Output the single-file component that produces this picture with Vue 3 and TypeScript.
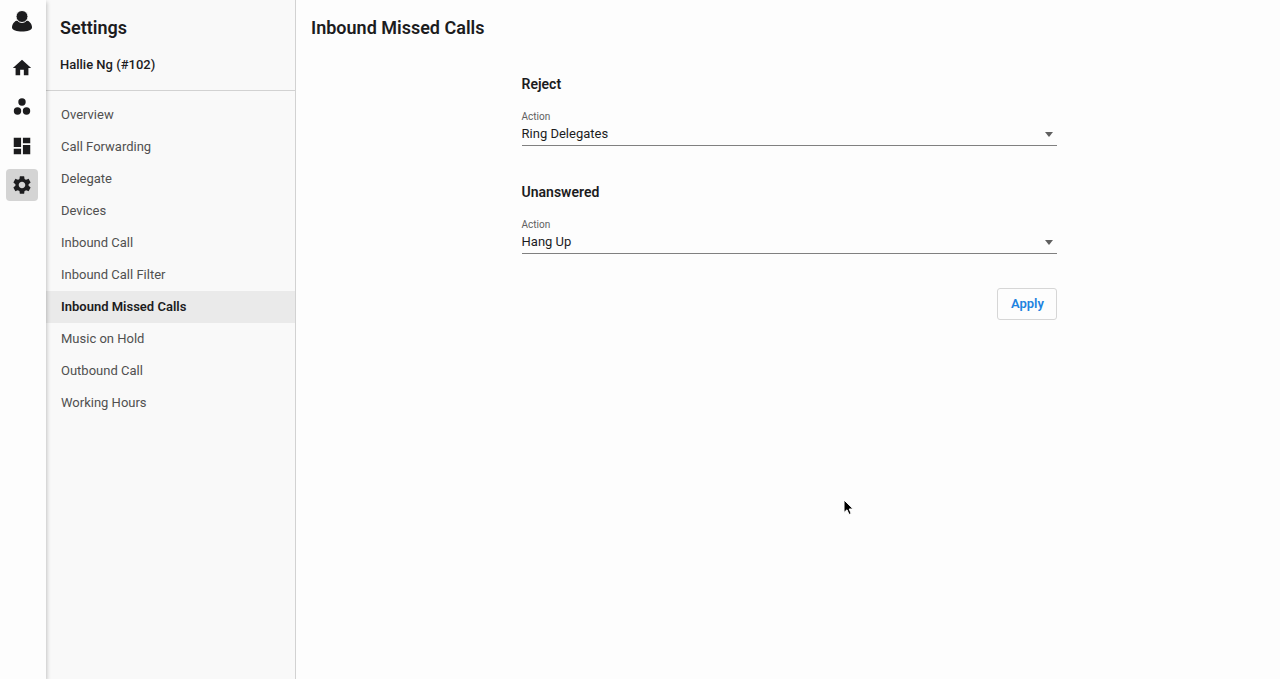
<script setup lang="ts">
import { ref } from 'vue'

const items: string[] = [
  'Overview',
  'Call Forwarding',
  'Delegate',
  'Devices',
  'Inbound Call',
  'Inbound Call Filter',
  'Inbound Missed Calls',
  'Music on Hold',
  'Outbound Call',
  'Working Hours',
]
const active = ref('Inbound Missed Calls')

const actions: string[] = ['Ring Delegates', 'Hang Up', 'Voicemail']
const sections = ref([
  { id: 'reject', title: 'Reject', action: 'Ring Delegates' },
  { id: 'unanswered', title: 'Unanswered', action: 'Hang Up' },
])
</script>

<template>
  <div class="app">
    <nav class="rail" aria-label="Main">
      <button class="rail-btn account" type="button" aria-label="Account">
        <svg width="22" height="22" viewBox="0 0 22 22">
          <path d="M1 17.500C1 14.500 3 11.500 5.500 10.800h11c2.500.7 4.500 3.700 4.500 6.700 0 2.700-5 4.100-10 4.100s-10-1.400-10-4.100z" />
          <ellipse cx="11" cy="6.500" rx="6" ry="6" class="halo" />
        </svg>
      </button>
      <button class="rail-btn" type="button" aria-label="Home">
        <svg width="22" height="22" viewBox="0 0 24 24"><path d="M10 20v-6h4v6h5v-8h3L12 3 2 12h3v8z" /></svg>
      </button>
      <button class="rail-btn" type="button" aria-label="Groups">
        <svg width="22" height="22" viewBox="0 0 22 22">
          <circle cx="11" cy="6" r="3.700" />
          <circle cx="6.500" cy="15" r="3.700" />
          <circle cx="15.500" cy="15" r="3.700" />
        </svg>
      </button>
      <button class="rail-btn" type="button" aria-label="Dashboard">
        <svg width="22" height="22" viewBox="0 0 24 24"><path d="M3 13h8V3H3v10zm0 8h8v-6H3v6zm10 0h8V11h-8v10zm0-18v6h8V3h-8z" /></svg>
      </button>
      <button class="rail-btn current" type="button" aria-label="Settings">
        <svg width="22" height="22" viewBox="0 0 24 24"><path d="M19.14 12.94c.04-.3.06-.61.06-.94 0-.32-.02-.64-.07-.94l2.030-1.580c.18-.14.23-.41.12-.61l-1.920-3.320c-.12-.22-.37-.29-.59-.22l-2.390.96c-.5-.38-1.030-.7-1.620-.94l-.36-2.540c-.04-.24-.24-.41-.48-.41h-3.840c-.24 0-.43.17-.47.41l-.36 2.540c-.59.24-1.130.57-1.620.94l-2.390-.96c-.22-.08-.47 0-.59.22L2.740 8.870c-.12.21-.08.47.12.61l2.030 1.580c-.05.3-.09.63-.09.94s.02.64.07.94l-2.030 1.580c-.18.14-.23.41-.12.61l1.920 3.320c.12.22.37.29.59.22l2.390-.96c.5.38 1.030.7 1.620.94l.36 2.540c.05.24.24.41.48.41h3.840c.24 0 .44-.17.47-.41l.36-2.540c.59-.24 1.130-.56 1.620-.94l2.390.96c.22.08.47 0 .59-.22l1.920-3.320c.12-.22.07-.47-.12-.61l-2.010-1.580zM12 15.600c-1.980 0-3.600-1.620-3.600-3.600s1.620-3.600 3.600-3.600 3.600 1.620 3.600 3.600-1.620 3.600-3.600 3.600z" /></svg>
      </button>
    </nav>

    <aside class="sidebar">
      <header class="side-head">
        <h2>Settings</h2>
        <p>Hallie Ng (#102)</p>
      </header>
      <ul class="menu">
        <li v-for="item in items" :key="item">
          <a href="#" :class="{ active: item === active }" @click.prevent="active = item">{{ item }}</a>
        </li>
      </ul>
    </aside>

    <main class="content">
      <h1>Inbound Missed Calls</h1>
      <form class="form" @submit.prevent>
        <section v-for="s in sections" :key="s.id">
          <h3>{{ s.title }}</h3>
          <label :for="s.id">Action</label>
          <div class="field">
            <select :id="s.id" v-model="s.action">
              <option v-for="a in actions" :key="a">{{ a }}</option>
            </select>
            <svg class="caret" width="8" height="5" viewBox="0 0 8 5"><path d="M0 0h8L4 5z" /></svg>
          </div>
        </section>
        <button class="apply" type="submit">Apply</button>
      </form>
    </main>

    <svg class="pointer" width="12" height="18" viewBox="0 0 12 18">
      <path d="M1 1v12.500l3-2.700 2 4.700 2.200-1-2-4.500h4z" />
    </svg>
  </div>
</template>

<style>
body {
  background: #fdfdfd;
}
</style>

<style scoped>
.app {
  position: relative;
  display: flex;
  min-height: 100vh;
  font-family: Roboto, "Liberation Sans", sans-serif;
  color: #1c1c1e;
}
h1, h2, h3, p, ul {
  margin: 0;
  padding: 0;
}
.rail {
  position: relative;
  z-index: 1;
  flex: none;
  box-sizing: border-box;
  width: 46px;
  padding: 5px 8px 0 6px;
  display: flex;
  flex-direction: column;
  gap: 7px;
  background: #fdfdfd;
  box-shadow: 1px 2px 4px rgba(0, 0, 0, 0.22);
}
.rail-btn {
  width: 32px;
  height: 32px;
  padding: 0;
  border: 0;
  border-radius: 4px;
  background: none;
  display: grid;
  place-items: center;
  cursor: pointer;
}
.account {
  margin-bottom: 8px;
}
.current {
  background: #d4d4d4;
}
.rail-btn svg {
  fill: #1c1c1e;
}
.halo {
  stroke: #fdfdfd;
  stroke-width: 1px;
}
.sidebar {
  flex: none;
  box-sizing: border-box;
  width: 250px;
  background: #f9f9f9;
  border-right: 1px solid #d2d2d2;
}
.side-head {
  padding: 16px 14px;
  border-bottom: 1px solid #d2d2d2;
}
h2, h1 {
  font-size: 18px;
  line-height: 24px;
  font-weight: 600;
}
.side-head p {
  margin-top: 15px;
  font-size: 13px;
  line-height: 19px;
  font-weight: 500;
}
.menu {
  list-style: none;
  padding-top: 8px;
}
.menu a {
  display: block;
  padding: 0 15px;
  font-size: 13px;
  line-height: 32px;
  color: #505050;
  text-decoration: none;
}
.menu a.active {
  background: #eaeaea;
  color: #1c1c1e;
  font-weight: 600;
}
.content {
  flex: 1;
  padding: 16px 12px 16px 15px;
}
.form {
  display: flex;
  flex-direction: column;
  width: 56%;
  margin: 34px auto 0;
}
section {
  display: flex;
  flex-direction: column;
}
section + section {
  margin-top: 36px;
}
h3 {
  font-size: 14px;
  line-height: 20px;
  font-weight: 600;
}
label {
  margin-top: 17px;
  font-size: 10px;
  line-height: 12px;
  color: #606060;
}
.field {
  display: flex;
  align-items: center;
  border-bottom: 1px solid #808080;
}
select {
  flex: 1;
  height: 22px;
  padding: 0;
  border: 0;
  outline: 0;
  appearance: none;
  background: none;
  font: 400 13px/20px Roboto, "Liberation Sans", sans-serif;
  color: #1c1c1e;
}
.caret {
  margin-right: 4px;
  fill: #606060;
}
.apply {
  align-self: flex-end;
  width: 60px;
  height: 32px;
  margin-top: 34px;
  padding: 0;
  border: 1px solid #d6d6d6;
  border-radius: 3px;
  background: none;
  font: 600 13px/20px Roboto, "Liberation Sans", sans-serif;
  color: #1f83e0;
  cursor: pointer;
}
.pointer {
  position: absolute;
  left: 843px;
  top: 499px;
  fill: #000;
  stroke: #fff;
  stroke-width: 1px;
}
</style>
